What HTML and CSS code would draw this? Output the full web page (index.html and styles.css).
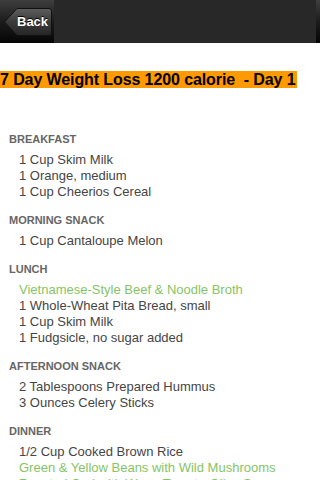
FILE: index.html
```html
<!DOCTYPE html>
<html>
<head>
<meta charset="utf-8">
<link rel="stylesheet" href="styles.css">
</head>
<body>
<div class="header">
  <div class="header-left">
    <a class="back" href="#">
      <svg class="back-shape" width="50" height="30" viewBox="0 0 50 30">
        <defs>
          <linearGradient id="bg" x1="0" y1="0" x2="0" y2="1">
            <stop offset="0" stop-color="#5e5e5e"/>
            <stop offset="0.5" stop-color="#3a3a3a"/>
            <stop offset="1" stop-color="#262626"/>
          </linearGradient>
        </defs>
        <path d="M14 1.5 H46 Q48.5 1.5 48.5 4 V26 Q48.5 28.5 46 28.5 H14 L1.5 15 Z" fill="url(#bg)" stroke="#111" stroke-width="1" stroke-linejoin="round"/>
      </svg>
      <span class="back-label">Back</span>
    </a>
  </div>
  <div class="header-mid"></div>
  <div class="header-right"></div>
</div>

<h1 class="title"><span class="title-text">7 Day Weight Loss 1200 calorie&nbsp; - Day 1</span></h1>

<div class="section">
  <div class="heading">BREAKFAST</div>
  <ul class="items">
    <li>1 Cup Skim Milk</li>
    <li>1 Orange, medium</li>
    <li>1 Cup Cheerios Cereal</li>
  </ul>
</div>
<div class="section">
  <div class="heading">MORNING SNACK</div>
  <ul class="items">
    <li>1 Cup Cantaloupe Melon</li>
  </ul>
</div>
<div class="section">
  <div class="heading">LUNCH</div>
  <ul class="items">
    <li class="link">Vietnamese-Style Beef &amp; Noodle Broth</li>
    <li>1 Whole-Wheat Pita Bread, small</li>
    <li>1 Cup Skim Milk</li>
    <li>1 Fudgsicle, no sugar added</li>
  </ul>
</div>
<div class="section">
  <div class="heading">AFTERNOON SNACK</div>
  <ul class="items">
    <li>2 Tablespoons Prepared Hummus</li>
    <li>3 Ounces Celery Sticks</li>
  </ul>
</div>
<div class="section">
  <div class="heading">DINNER</div>
  <ul class="items">
    <li>1/2 Cup Cooked Brown Rice</li>
    <li class="link">Green &amp; Yellow Beans with Wild Mushrooms</li>
    <li class="link">Roasted Cod with Warm Tomato-Olive Sauce</li>
  </ul>
</div>
</body>
</html>
```

FILE: styles.css
```css
html, body {
  margin: 0;
  padding: 0;
  background: #ffffff;
}
body {
  font-family: "Liberation Sans", Arial, sans-serif;
  width: 320px;
  overflow: hidden;
}
.header {
  display: flex;
  height: 43px;
  background: linear-gradient(#3e3e3e, #1c1c1c 50%, #050505);
}
.header-left {
  width: 54px;
  display: flex;
  align-items: center;
}
.header-mid {
  flex: 1;
  background: #282828;
}
.header-right {
  width: 4px;
}
.back {
  position: relative;
  display: block;
  width: 50px;
  height: 30px;
  margin-left: 3px;
  margin-top: 1px;
  text-decoration: none;
}
.back-shape {
  display: block;
}
.back-label {
  position: absolute;
  left: 14px;
  top: 7px;
  color: #ffffff;
  font-weight: bold;
  font-size: 13px;
  line-height: 15px;
  text-shadow: 0 -1px 0 #000;
}
.title {
  margin: 27px 0 43px 0;
  font-size: 16px;
  line-height: 19px;
  font-weight: bold;
  color: #000;
  letter-spacing: -0.1px;
}
.title-text {
  background: #ff9900;
  padding-right: 1px;
}
.section {
  margin-top: 13px;
  padding-left: 9px;
}
.heading {
  font-size: 11px;
  line-height: 14px;
  font-weight: bold;
  color: #666666;
  margin-bottom: 6px;
}
.items {
  list-style: none;
  margin: 0;
  padding: 0 0 0 10px;
}
.items li {
  font-size: 13px;
  line-height: 16px;
  color: #454545;
  white-space: nowrap;
}
.items li.link {
  color: #86c466;
}
```
